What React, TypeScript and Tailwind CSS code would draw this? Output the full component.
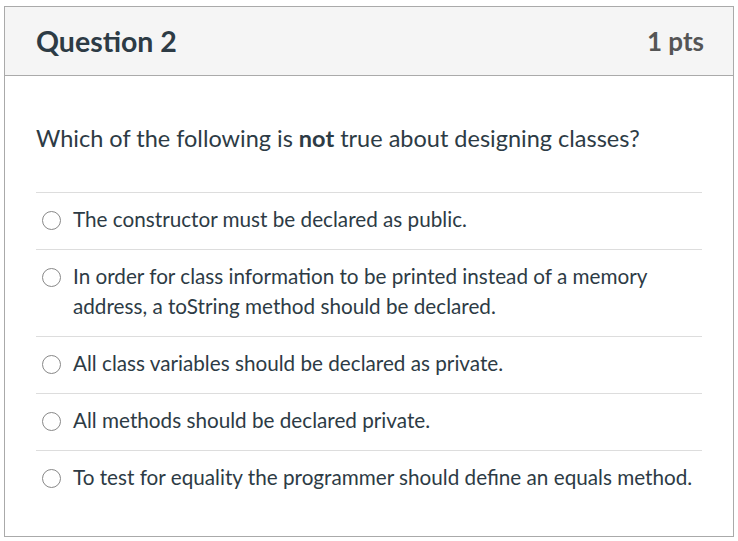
import React from 'react';

const answers = [
  'The constructor must be declared as public.',
  'In order for class information to be printed instead of a memory address, a toString method should be declared.',
  'All class variables should be declared as private.',
  'All methods should be declared private.',
  'To test for equality the programmer should define an equals method.',
];

export default function App() {
  return (
    <div className="min-h-screen bg-white pl-[4px] pt-[6px]" style={{ fontFamily: 'Lato, "Open Sans", sans-serif' }}>
      <div className="w-[730px] h-[531px] border border-[#aaaaaa]">
        {/* Header */}
        <div className="flex h-[69px] items-center justify-between border-b border-[#aaaaaa] bg-[#f5f5f5] pl-[31px] pr-[29px]">
          <h2 className="text-[28.5px] font-bold text-[#2d3b45]">Question 2</h2>
          <span className="text-[26px] font-bold text-[#555555]">1 pts</span>
        </div>

        {/* Body */}
        <div className="px-[31px] pt-[46px]">
          <p className="text-[23.5px] leading-[32px] text-[#2d3b45]">
            Which of the following is <strong className="font-bold">not</strong> true about designing classes?
          </p>
          <div className="mt-[38px]">
            {answers.map((a, i) => (
              <label key={i} className="flex items-start gap-[12px] border-t border-[#dddddd] pt-[11px] pb-[15px] pl-[6px] text-[20.7px] leading-[30px] text-[#2d3b45]">
                <span className="mt-[7px] h-[19px] w-[19px] shrink-0 rounded-full border border-[#888888] bg-white" />
                <span>{a}</span>
              </label>
            ))}
          </div>
        </div>
      </div>
    </div>
  );
}
